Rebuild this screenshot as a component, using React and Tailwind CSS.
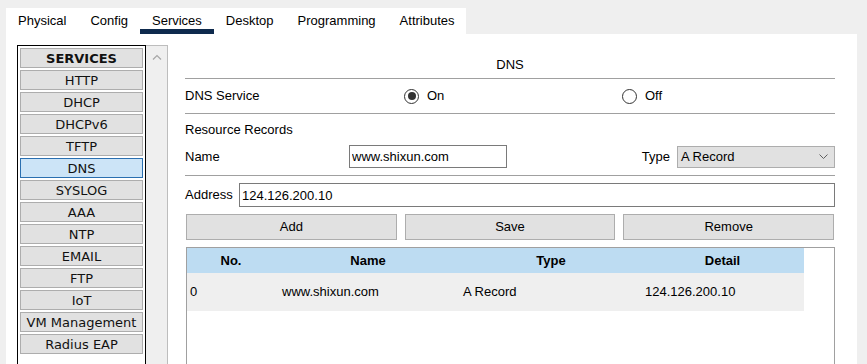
import { useState } from "react";

const TABS = ["Physical", "Config", "Services", "Desktop", "Programming", "Attributes"];

const SERVICES = [
  "HTTP",
  "DHCP",
  "DHCPv6",
  "TFTP",
  "DNS",
  "SYSLOG",
  "AAA",
  "NTP",
  "EMAIL",
  "FTP",
  "IoT",
  "VM Management",
  "Radius EAP",
];

const RECORDS = [
  { no: 0, name: "www.shixun.com", type: "A Record", detail: "124.126.200.10" },
];

function Radio({ checked, label, onClick }) {
  return (
    <button type="button" onClick={onClick} className="flex items-center gap-[8px]">
      <span className="flex items-center justify-center w-[15px] h-[15px] rounded-full border border-[#333] bg-white">
        {checked && <span className="w-[8px] h-[8px] rounded-full bg-[#333]" />}
      </span>
      <span>{label}</span>
    </button>
  );
}

function Rule() {
  return <div className="h-px bg-[#a0a0a0]" />;
}

export default function App() {
  const [tab, setTab] = useState("Services");
  const [service, setService] = useState("DNS");
  const [dnsOn, setDnsOn] = useState(true);

  return (
    <div className="w-[867px] h-[364px] overflow-hidden bg-[#efefef] text-[13px] text-black font-['Liberation_Sans',Arial,sans-serif]">
      {/* tabs */}
      <div className="pt-[8px] pl-[6px]">
        <div className="flex w-[460px] h-[26px] bg-white">
          {TABS.map((t) => (
            <button
              key={t}
              type="button"
              onClick={() => setTab(t)}
              className={`h-[26px] px-[12px] pt-[5px] leading-[16px] border-b-[5px] ${
                tab === t ? "border-[#0e2a4d]" : "border-transparent"
              }`}
            >
              {t}
            </button>
          ))}
        </div>
      </div>

      {/* body */}
      <div className="ml-[6px] w-[851px] h-[330px] bg-white flex">
        {/* service list */}
        <div className="ml-[11px] mt-[11px] flex">
          <div className="w-[129px] h-[330px] border-t border-x border-black p-[2px] flex flex-col gap-[2px] font-['DejaVu_Sans',Verdana,sans-serif] text-[13px] text-[#111]">
            <div className="h-[20px] leading-[19px] text-center font-bold bg-[#e1e1e1] border border-[#adadad]">
              SERVICES
            </div>
            {SERVICES.map((s) => (
              <button
                key={s}
                type="button"
                onClick={() => setService(s)}
                className={`h-[20px] leading-[19px] text-center border ${
                  service === s
                    ? "bg-[#cce4f7] border-[#2a6fb0]"
                    : "bg-[#e1e1e1] border-[#adadad]"
                }`}
              >
                {s}
              </button>
            ))}
          </div>
          <div className="w-[22px] h-[330px] bg-[#efefef] border-t border-r border-[#bdbdbd] flex justify-center pt-[8px]">
            <svg width="10" height="6" viewBox="0 0 10 6" fill="none">
              <path d="M1 5.5 L5 1.5 L9 5.5" stroke="#a6a6a6" strokeWidth="1.2" />
            </svg>
          </div>
        </div>

        {/* DNS panel */}
        <div className="ml-[17px] w-[650px] pt-[23px]">
          <div className="h-[16px] leading-[16px] text-center">DNS</div>
          <div className="mt-[5px]">
            <Rule />
          </div>
          <div className="h-[34px] grid grid-cols-[219px_218px_1fr] items-center">
            <span>DNS Service</span>
            <Radio checked={dnsOn} label="On" onClick={() => setDnsOn(true)} />
            <Radio checked={!dnsOn} label="Off" onClick={() => setDnsOn(false)} />
          </div>
          <Rule />
          <div className="pt-[8px] h-[24px] leading-[16px]">Resource Records</div>
          <div className="mt-[7px] h-[23px] flex items-center">
            <span className="w-[164px]">Name</span>
            <input
              defaultValue="www.shixun.com"
              className="w-[158px] h-[23px] px-[2px] border border-[#7a7a7a] outline-none"
            />
            <span className="ml-auto mr-[7px]">Type</span>
            <div className="w-[158px] h-[22px] flex items-center pl-[3px] pr-[6px] bg-[#e1e1e1] border border-[#adadad]">
              <span className="flex-1">A Record</span>
              <svg width="9" height="5" viewBox="0 0 9 5" fill="none">
                <path d="M0.5 0.5 L4.5 4.5 L8.5 0.5" stroke="#606060" />
              </svg>
            </div>
          </div>
          <div className="mt-[7px]">
            <Rule />
          </div>
          <div className="mt-[7px] h-[24px] flex items-center">
            <span className="w-[54px]">Address</span>
            <input
              defaultValue="124.126.200.10"
              className="flex-1 h-[24px] px-[2px] border border-[#7a7a7a] outline-none"
            />
          </div>
          <div className="mt-[7px] ml-px mr-px grid grid-cols-3 gap-[8px]">
            {["Add", "Save", "Remove"].map((b) => (
              <button
                key={b}
                type="button"
                className="h-[26px] bg-[#e1e1e1] border border-[#adadad]"
              >
                {b}
              </button>
            ))}
          </div>
          <div className="mt-[7px] ml-px h-[130px] border border-[#a0a0a0] bg-white">
            <div className="w-[617px] h-[25px] grid grid-cols-[88px_186px_180px_163px] items-center bg-[#bddcf2] font-bold">
              <span className="text-center">No.</span>
              <span className="text-center">Name</span>
              <span className="text-center">Type</span>
              <span className="text-center">Detail</span>
            </div>
            {RECORDS.map((r) => (
              <div
                key={r.no}
                className="w-[617px] h-[38px] grid grid-cols-[88px_186px_180px_163px] items-center bg-[#efefef]"
              >
                <span className="pl-[3px]">{r.no}</span>
                <span className="pl-[7px]">{r.name}</span>
                <span className="pl-[2px]">{r.type}</span>
                <span className="pl-[4px]">{r.detail}</span>
              </div>
            ))}
          </div>
        </div>
      </div>
    </div>
  );
}
